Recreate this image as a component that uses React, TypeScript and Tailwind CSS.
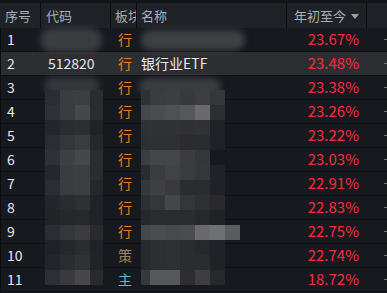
import React from "react";

type Row = { no: number; code: string; tag: string; tagColor: string; name: string; pct: string };

const rows: Row[] = [
  { no: 1, code: "", tag: "行", tagColor: "text-[#e8801e]", name: "", pct: "23.67%" },
  { no: 2, code: "512820", tag: "行", tagColor: "text-[#e8801e]", name: "银行业ETF", pct: "23.48%" },
  { no: 3, code: "", tag: "行", tagColor: "text-[#e8801e]", name: "", pct: "23.38%" },
  { no: 4, code: "", tag: "行", tagColor: "text-[#e8801e]", name: "", pct: "23.26%" },
  { no: 5, code: "", tag: "行", tagColor: "text-[#e8801e]", name: "", pct: "23.22%" },
  { no: 6, code: "", tag: "行", tagColor: "text-[#e8801e]", name: "", pct: "23.03%" },
  { no: 7, code: "", tag: "行", tagColor: "text-[#e8801e]", name: "", pct: "22.91%" },
  { no: 8, code: "", tag: "行", tagColor: "text-[#e8801e]", name: "", pct: "22.83%" },
  { no: 9, code: "", tag: "行", tagColor: "text-[#e8801e]", name: "", pct: "22.75%" },
  { no: 10, code: "", tag: "策", tagColor: "text-[#a4845f]", name: "", pct: "22.74%" },
  { no: 11, code: "", tag: "主", tagColor: "text-[#4cc3d2]", name: "", pct: "18.72%" },
];

// pixelated cover over the code column: x = 45, 60, 75, 90 ; y from 90 step 15
const codeMosaic = [
  ["#2a2d33", "#3a3c40", "#3c3e42", "#2a2c30"],
  ["#2e3238", "#3a3c40", "#45474b", "#2a2c30"],
  ["#23262b", "#2a2c30", "#2c2e32", "#1f2226"],
  ["#2a2d33", "#34363a", "#3a3c40", "#25272b"],
  ["#2e3238", "#3e4044", "#45474b", "#2a2c30"],
  ["#24272c", "#3a3c40", "#3c3e42", "#2a2c30"],
  ["#2a2d33", "#3a3c40", "#3c3e42", "#25272b"],
  ["#23262b", "#2a2c30", "#2e3034", "#1f2226"],
  ["#202328", "#252729", "#26282c", "#1f2226"],
  ["#2a2d33", "#34363a", "#3a3c40", "#2a2a2c"],
  ["#1f2227", "#25272b", "#2a2c30", "#1f2226"],
  ["#22252a", "#2a2c30", "#303236", "#212326"],
  ["#2c2f35", "#3a3a3c", "#45474b", "#2a2a2c"],
];

// name column: x = 141(9px), 150, 165, 180, 195, 210, 225
const nameMosaic = [
  ["#2e3136", "#3a3c40", "#3c3e42", "#38393c", "#3c3e42", "#35373a", ""],
  ["#44474c", "#4a4c50", "#4e5054", "#55575a", "#6a6a6c", "#2c2e32", ""],
  ["#2e3136", "#303236", "#303236", "#2e3034", "#303236", "#1e2125", ""],
  ["#2c2f34", "#2e3034", "#2e3034", "#2c2c2e", "#2a2c30", "#1e2125", ""],
  ["#3a3d42", "#44464a", "#44464a", "#3a3c40", "#34363a", "", ""],
  ["#2a2c30", "#3a3c40", "#404246", "#3a3c40", "#353739", "#1f2226", ""],
  ["#34373c", "#3e4044", "#3a3a3c", "#2a2c30", "#2a2c30", "#1f2226", ""],
  ["#2c2f34", "#34363a", "#44464a", "#34363a", "#2e3034", "#2a2a2c", ""],
  ["#25282d", "#2a2c30", "#2a2c30", "#2a2c30", "#26282c", "#1f2226", ""],
  ["#44474c", "#4a4c50", "#48494b", "#4a4c50", "#6a6a6c", "#6e7072", "#5a5c5e"],
  ["#26292e", "#2c2e32", "#2e3034", "#2a2c30", "#26282c", "#1f2226", ""],
  ["#26292e", "#2c2e32", "#2e3034", "#2a2c30", "#2a2c30", "#202226", ""],
  ["#36383c", "#56585c", "#56585c", "#2e2e32", "#3c3e42", "#26282a", ""],
];

const nameX = [141, 150, 165, 180, 195, 210, 225];

function Mosaic() {
  const cells: React.ReactNode[] = [];
  codeMosaic.forEach((r, i) =>
    r.forEach((c, j) =>
      cells.push(
        <div
          key={`c${i}-${j}`}
          className="absolute"
          style={{ left: 45 + j * 15, top: 90 + i * 15, width: j === 3 ? 13 : 15, height: 15, background: c }}
        />
      )
    )
  );
  nameMosaic.forEach((r, i) =>
    r.forEach((c, j) => {
      if (!c) return;
      cells.push(
        <div
          key={`n${i}-${j}`}
          className="absolute"
          style={{ left: nameX[j], top: 90 + i * 15, width: j === 0 ? 9 : 15, height: 15, background: c }}
        />
      );
    })
  );
  return (
    <div className="pointer-events-none absolute inset-0">
      {/* soft smudges on rows 1 and 3 */}
      <div className="absolute left-[40px] top-[28px] h-[24px] w-[62px] rounded-full bg-[#3a3c40] blur-[3px]" />
      <div className="absolute left-[141px] top-[30px] h-[20px] w-[104px] rounded-full bg-[#3e4044] blur-[3px]" />
      <div className="absolute left-[44px] top-[77px] h-[18px] w-[56px] rounded-full bg-[#33363a] blur-[3px]" />
      <div className="absolute left-[139px] top-[78px] h-[18px] w-[82px] rounded-full bg-[#3a3c40] blur-[3px]" />
      {cells}
    </div>
  );
}

export default function App() {
  return (
    <div
      className="relative h-[293px] w-[387px] overflow-hidden bg-[#16191e]"
      style={{ fontFamily: '"Noto Sans CJK SC", "Noto Sans", sans-serif' }}
    >
      {/* header */}
      <div className="grid h-[28px] grid-cols-[41px_70px_26px_150px_80px_20px] border-t-[3px] border-[#121418] bg-[#1f2227] text-[13px] text-[#a9b0b8]">
        <div className="flex items-center border-r border-[#0b0c0e] pl-[5px]">序号</div>
        <div className="flex items-center border-r border-[#0b0c0e] pl-[5px]">代码</div>
        <div className="flex items-center overflow-hidden whitespace-nowrap border-r border-[#0b0c0e] pl-[4px]">板块</div>
        <div className="flex items-center border-r border-[#0b0c0e] pl-[4px]">名称</div>
        <div className="flex items-center justify-end gap-[5px] border-r border-[#0b0c0e] pr-[7px]">
          年初至今
          <span className="mt-[1px] h-0 w-0 border-x-[4px] border-t-[5px] border-x-transparent border-t-[#9aa1a8]" />
        </div>
        <div />
      </div>

      {/* body */}
      <div className="border-l border-[#0b0c0e]">
        {rows.map((r) => (
          <div
            key={r.no}
            className={`grid h-[24px] grid-cols-[40px_70px_26px_150px_80px_20px] items-center border-b border-[#0e1013] text-[14px] ${
              r.no === 2 ? "bg-[#2c2e32]" : ""
            }`}
          >
            <div className="pl-[6px] text-[#e4e8ee]">{r.no}</div>
            <div className="pl-[7px] text-[#e4e8ee]">{r.code}</div>
            <div className={`pl-[7px] ${r.tagColor}`}>{r.tag}</div>
            <div className="pl-[4px] text-[#e8eaee]">{r.name}</div>
            <div className="pr-[8px] text-right text-[15px] text-[#ff2a3a]">{r.pct}</div>
            <div className="flex justify-end">
              <span className="h-[1px] w-[3px] bg-[#1fa35a]" />
            </div>
          </div>
        ))}
      </div>

      <Mosaic />
    </div>
  );
}
